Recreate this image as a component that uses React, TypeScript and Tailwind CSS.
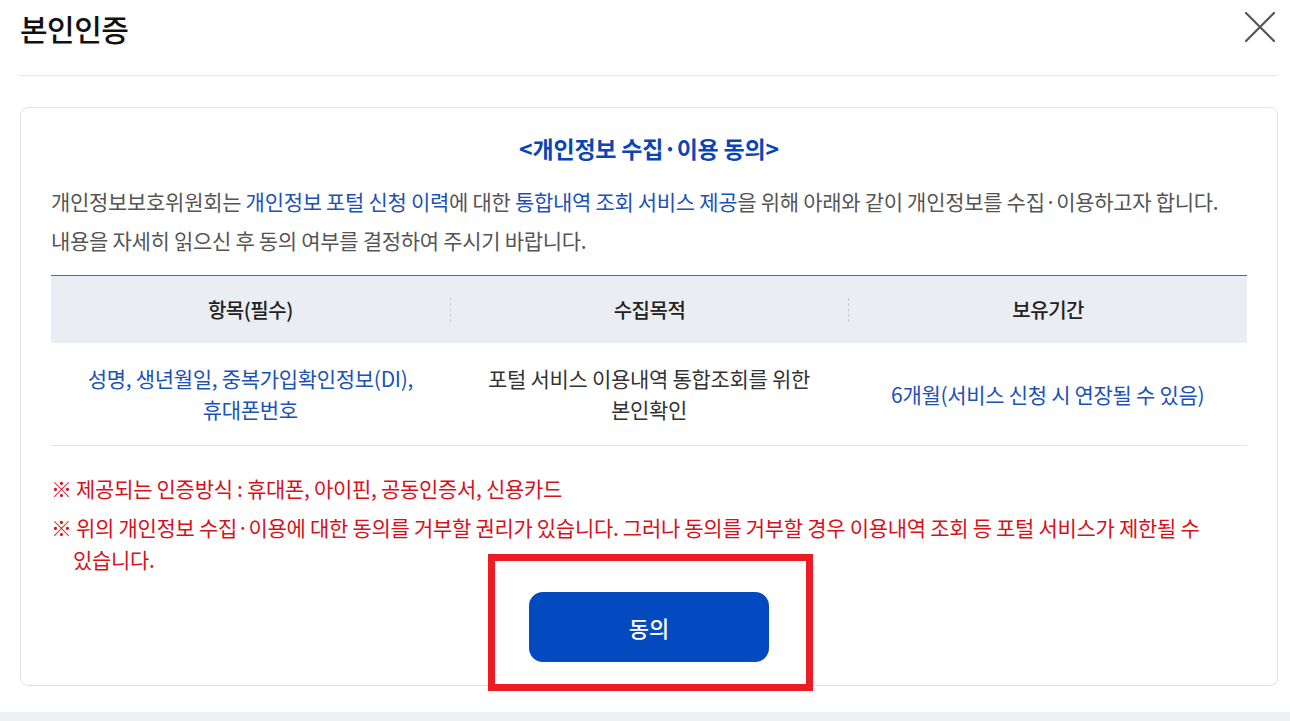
import React from "react";

const font = { fontFamily: '"Noto Sans CJK KR", "Noto Sans", sans-serif' };

export default function App() {
  return (
    <div className="relative h-[721px] w-[1290px] overflow-hidden bg-white" style={font}>
      <div className="pl-5 pr-3">
        <div className="flex h-[76px] items-start justify-between border-b border-[#e6e6e6]">
          <h1 className="pt-[8px] text-[30px] font-medium leading-[40px] tracking-[-0.5px] text-[#111]">본인인증</h1>
          <button className="mr-[2px] mt-[11px] flex h-[32px] w-[32px] items-center justify-center">
            <svg width="32" height="32" viewBox="0 0 32 32" fill="none" stroke="#555" strokeWidth="2.2" strokeLinecap="round">
              <path d="M2 2 L30 30 M30 2 L2 30" />
            </svg>
          </button>
        </div>

        <div className="mt-[31px] h-[579px] rounded-[8px] border border-[#e2e2e2] px-[30px] pt-[24px]">
          <h2 className="text-center text-[23px] font-bold leading-[32px] tracking-[-0.2px] text-[#0a45b8]">
            &lt;개인정보 수집·이용 동의&gt;
          </h2>
          <p className="mt-[18px] text-[21px] leading-[39px] tracking-[-0.3px] text-[#555]">
            개인정보보호위원회는 <span className="text-[#1c52b5]">개인정보 포털 신청 이력</span>에 대한{" "}
            <span className="text-[#1c52b5]">통합내역 조회 서비스 제공</span>을 위해 아래와 같이 개인정보를 수집·이용하고자 합니다.
            <br />
            내용을 자세히 읽으신 후 동의 여부를 결정하여 주시기 바랍니다.
          </p>

          <div className="mt-[15px] border-t border-[#666]">
            <div className="grid h-[67px] grid-cols-3 items-center bg-[#eaeef2] text-[20px] font-medium tracking-[-0.5px] text-[#222]">
              <div className="text-center">항목(필수)</div>
              <div className="border-l border-dashed border-[#c8ccd0] text-center leading-[24px]">수집목적</div>
              <div className="border-l border-dashed border-[#c8ccd0] text-center leading-[24px]">보유기간</div>
            </div>
            <div className="grid h-[103px] grid-cols-3 items-center border-b border-[#e4e4e4] text-[21px] leading-[31px] tracking-[-0.3px]">
              <div className="text-center text-[#1c52b5]">
                성명, 생년월일, 중복가입확인정보(DI),
                <br />
                휴대폰번호
              </div>
              <div className="text-center text-[#333]">
                포털 서비스 이용내역 통합조회를 위한
                <br />
                본인확인
              </div>
              <div className="text-center text-[#1c52b5]">6개월(서비스 신청 시 연장될 수 있음)</div>
            </div>
          </div>

          <ul className="mt-[26px] flex flex-col gap-[7px] text-[21px] leading-[32px] tracking-[-0.3px] text-[#d6111a]">
            <li className="pl-[22px] -indent-[22px]">※ 제공되는 인증방식 : 휴대폰, 아이핀, 공동인증서, 신용카드</li>
            <li className="pl-[22px] -indent-[22px]">
              ※ 위의 개인정보 수집·이용에 대한 동의를 거부할 권리가 있습니다. 그러나 동의를 거부할 경우 이용내역 조회 등 포털 서비스가 제한될 수
              <br />
              있습니다.
            </li>
          </ul>

          <div className="mt-[17px] flex justify-center">
            <button className="h-[70px] w-[240px] rounded-[14px] bg-[#034ac0] text-[22px] font-medium text-white">
              동의
            </button>
          </div>
        </div>
      </div>

      <div className="absolute bottom-0 left-0 h-[9px] w-full bg-[#eef1f4]" />

      <div className="absolute left-[488px] top-[554px] h-[137px] w-[325px] border-[7px] border-[#ed1c24]" />
    </div>
  );
}
